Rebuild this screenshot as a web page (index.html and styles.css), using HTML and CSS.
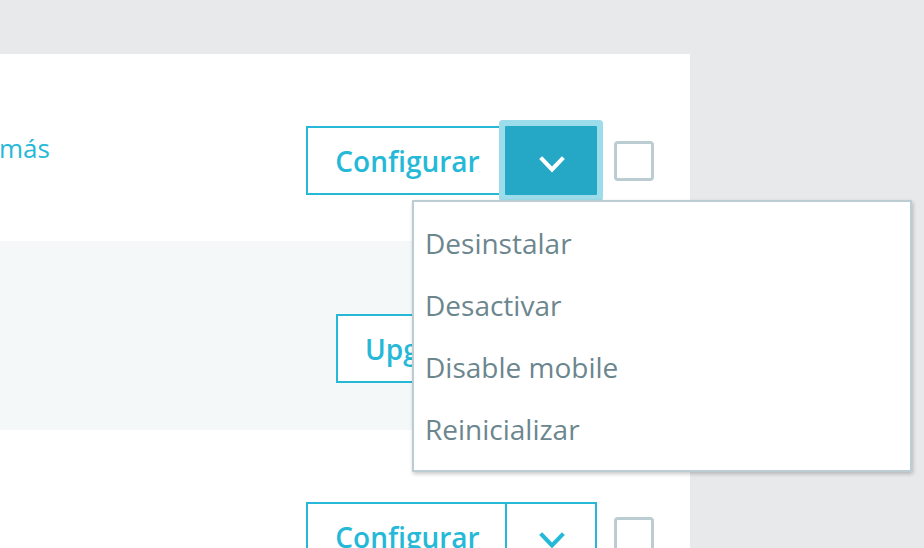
FILE: index.html
```html
<!DOCTYPE html>
<html lang="es">
<head>
<meta charset="utf-8">
<title>Módulos</title>
<link rel="stylesheet" href="styles.css">
</head>
<body>
<div class="panel">
  <div class="row row-first">
    <div class="info"><a class="more" href="#">más</a></div>
    <div class="actions">
      <div class="btn-group">
        <button class="btn btn-main">Configurar</button>
        <button class="btn btn-toggle is-open" aria-label="Más acciones">
          <svg class="chev" width="28" height="20" viewBox="0 0 28 20"><path d="M4 4 L14 14.5 L24 4" fill="none" stroke="currentColor" stroke-width="4" stroke-linejoin="miter" stroke-linecap="square"/></svg>
        </button>
        <ul class="menu">
          <li class="menu-item">Desinstalar</li>
          <li class="menu-item">Desactivar</li>
          <li class="menu-item">Disable mobile</li>
          <li class="menu-item">Reinicializar</li>
        </ul>
      </div>
      <span class="check"></span>
    </div>
  </div>
  <div class="row row-alt">
    <div class="info"></div>
    <div class="actions">
      <button class="btn btn-upgrade">Upgrade</button>
    </div>
  </div>
  <div class="row row-last">
    <div class="info"></div>
    <div class="actions">
      <div class="btn-group">
        <button class="btn btn-main">Configurar</button>
        <button class="btn btn-toggle" aria-label="Más acciones">
          <svg class="chev" width="28" height="20" viewBox="0 0 28 20"><path d="M4 4 L14 14.5 L24 4" fill="none" stroke="currentColor" stroke-width="4" stroke-linejoin="miter" stroke-linecap="square"/></svg>
        </button>
      </div>
      <span class="check"></span>
    </div>
  </div>
</div>
</body>
</html>
```

FILE: styles.css
```css
html, body {
  margin: 0;
  padding: 0;
}
body {
  background: #e8e9eb;
  font-family: "Open Sans", "Noto Sans", sans-serif;
  width: 924px;
  height: 548px;
  overflow: hidden;
}
.panel {
  width: 690px;
  margin-top: 54px;
  background: #fff;
}
.row {
  display: flex;
  justify-content: space-between;
  align-items: flex-start;
  box-sizing: border-box;
  padding-top: 72px;
  padding-right: 36px;
}
.row-first { height: 187px; }
.row-alt { height: 189px; background: #f4f8f9; padding-top: 73px; }
.row-last { height: 140px; }
.info { margin-top: 3px; }
.more {
  display: block;
  margin-left: -1px;
  font-size: 26px;
  line-height: 38px;
  color: #25b9d7;
  text-decoration: none;
}
.actions {
  display: flex;
  align-items: center;
  gap: 17px;
}
.btn-group {
  position: relative;
  display: flex;
}
.btn {
  box-sizing: border-box;
  height: 69px;
  margin: 0;
  font-family: "Open Sans", "Noto Sans", sans-serif;
  font-size: 28px;
  font-weight: 600;
  color: #25b9d7;
  background: #fff;
  border: 2px solid #25b9d7;
  border-radius: 0;
  display: flex;
  align-items: center;
  justify-content: center;
}
.btn-main {
  width: 201px;
  padding: 0 0 0 2px;
}
.btn-toggle {
  width: 92px;
  margin-left: -2px;
  padding: 0;
}
.btn-toggle.is-open {
  background: #25a8c6;
  border-color: #25a8c6;
  color: #fff;
  border-radius: 1px;
  box-shadow: 0 0 0 6px #9ddcea;
  position: relative;
  z-index: 1;
}
.chev { display: block; margin: 9px 0 0 2px; }
.btn-upgrade {
  width: 318px;
  justify-content: flex-start;
  padding-left: 27px;
}
.check {
  box-sizing: border-box;
  width: 40px;
  height: 40px;
  border: 3px solid #bbcdd2;
  border-radius: 4px;
  background: #fff;
}
.menu {
  position: absolute;
  top: 74px;
  left: 106px;
  z-index: 5;
  box-sizing: border-box;
  width: 500px;
  margin: 0;
  padding: 10px 0;
  list-style: none;
  background: #fff;
  border: 2px solid #bbcdd2;
  box-shadow: 1px 2px 4px rgba(0, 0, 0, 0.22);
}
.menu-item {
  height: 62px;
  line-height: 62px;
  padding-left: 11px;
  font-size: 28px;
  color: #6c868e;
  white-space: nowrap;
}
```
